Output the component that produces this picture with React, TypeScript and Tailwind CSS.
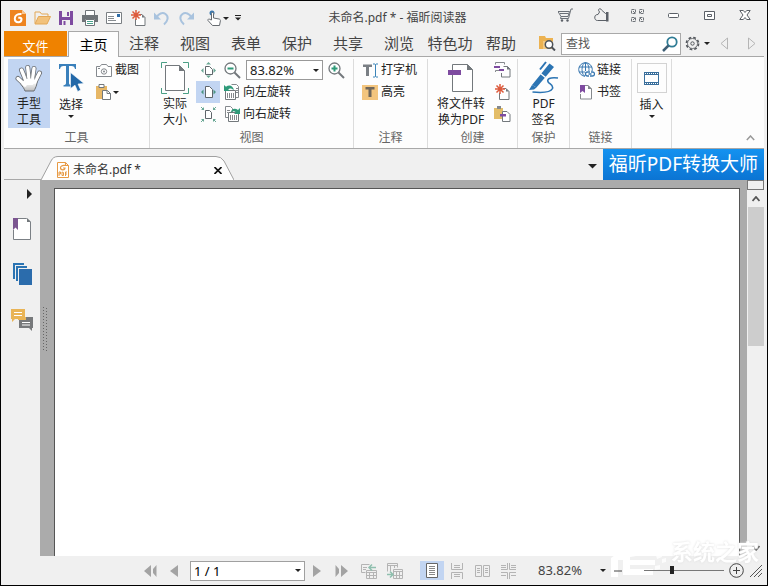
import { useState, type ReactNode } from 'react'

const MENU_TABS = ['注释', '视图', '表单', '保护', '共享', '浏览', '特色功', '帮助']

function Icon({ w, h, children }: { w: number; h: number; children: ReactNode }) {
  return (
    <svg width={w} height={h} viewBox={`0 0 ${w} ${h}`} fill="none" className="shrink-0" aria-hidden="true">
      {children}
    </svg>
  )
}

function Caret({ w = 6 }: { w?: number }) {
  return (
    <svg width={w} height={w / 2} viewBox="0 0 6 3" className="shrink-0" aria-hidden="true">
      <path d="M0 0h6L3 3z" fill="#222" />
    </svg>
  )
}

/* ---------- title bar icons ---------- */

const FoxitLogo = () => (
  <Icon w={16} h={16}>
    <path d="M0 0h12l4 4v12H0z" fill="#ee8420" />
    <path d="M12 0v4h4z" fill="#f9c58f" />
    <path d="M11.5 4c-4-.3-6.700 1.400-6.700 4.500 0 2.200 1.500 3.700 3.500 3.700 1.800 0 3.200-1.300 3.200-3 0-1-.6-1.500-1.500-1.500H8.300" stroke="#fff" strokeWidth="2" />
  </Icon>
)

const OpenIcon = () => (
  <Icon w={17} h={16}>
    <path d="M1 13.500V2h5l1.500 2H14v3" stroke="#e3a857" />
    <path d="M1 14 4.500 6.500h12L13 14z" fill="#f2c27c" stroke="#e3a857" />
  </Icon>
)

const SaveIcon = () => (
  <Icon w={14} h={14}>
    <path d="M0 0h14v14H0z" fill="#7e4ba0" />
    <path d="M3 0h8v6H3zM3 9h8v5H3z" fill="#f0f0f0" />
    <path d="M8 1h2v4H8zM4.500 10v4h2v-4z" fill="#7e4ba0" />
  </Icon>
)

const PrintIcon = () => (
  <Icon w={16} h={16}>
    <path d="M3.500 5V.5h9V5" fill="#fff" stroke="#6f7478" />
    <path d="M0 5h16v7h-3V9H3v3H0z" fill="#6f7478" />
    <path d="M3.500 9.500h9v6h-9z" fill="#fff" stroke="#6f7478" />
    <path d="M5 11.500h6M5 13.500h6" stroke="#4aa18a" />
  </Icon>
)

const MailIcon = () => (
  <Icon w={16} h={12}>
    <path d="M.5.5h15v11H.5z" fill="#fff" stroke="#7a7f83" />
    <path d="M2 4.500h6M2 6.500h6M2 8.500h8" stroke="#888d91" />
    <path d="M11 2h3v3h-3z" fill="#2f6da8" />
  </Icon>
)

const Burst = ({ x, y }: { x: number; y: number }) => (
  <g transform={`translate(${x} ${y})`} stroke="#dd5a3c" strokeWidth="1.500">
    <path d="M0-5V5M-5 0H5M-3.500-3.500l7 7M3.500-3.500l-7 7" />
  </g>
)

const NewIcon = () => (
  <Icon w={15} h={16}>
    <path d="M8 4.500h3l3 3v8H4.500V9" fill="#fff" stroke="#73787c" />
    <path d="M11 4.500v3h3z" fill="#73787c" />
    <Burst x={5} y={5} />
  </Icon>
)

const UndoIcon = () => (
  <Icon w={16} h={16}>
    <path d="M2.500 7.500c2-4 6-5.500 9-3.500 3.500 2.500 2.500 7-1.500 10.500" stroke="#a9c3de" strokeWidth="2" />
    <path d="M0 2.500v7h7z" fill="#a9c3de" />
  </Icon>
)

const RedoIcon = () => (
  <Icon w={16} h={16}>
    <path d="M13.500 7.500c-2-4-6-5.500-9-3.500C1 6.500 2 11 6 14.500" stroke="#a9c3de" strokeWidth="2" />
    <path d="M16 2.500v7H9z" fill="#a9c3de" />
  </Icon>
)

const TouchIcon = () => (
  <Icon w={14} h={16}>
    <circle cx="5" cy="3" r="2.500" fill="#3a78b0" />
    <path d="M4.500 10V3.500c0-1.500 2-1.500 2 0V8l5.500 1c1 .2 1.500.8 1.400 1.800l-.9 4.700h-7L1 10.500c-.5-1.300 1-2 2-1z" fill="#fff" stroke="#666b70" />
  </Icon>
)

const CartIcon = () => (
  <Icon w={15} h={14}>
    <path d="M0 3.500h11.500L10 8.500H3zM3 8.500l-.5 2h8L13 1h2M2 5.500h8.500" stroke="#6b7077" />
    <circle cx="4" cy="12.500" r="1.200" fill="#5b6067" />
    <circle cx="9.500" cy="12.500" r="1.200" fill="#5b6067" />
  </Icon>
)

const ThumbIcon = () => (
  <Icon w={15} h={14}>
    <path d="M4 6.500 5.500 4 4.500 2.200C4.300.5 7 .2 7.500 2l4 3.500h1v7h-9C1.500 12.500.6 11 .8 9c.2-1.800 1.500-2.500 3.200-2.500z" stroke="#5b6067" />
    <path d="M12 4h2.500v9.500H12z" fill="#5b6067" />
  </Icon>
)

const TilesIcon = () => (
  <Icon w={13} h={13}>
    <path d="M.5.5h4v4h-4zM8.500.5h4v4h-4zM.5 8.500h4v4h-4zM8.500 8.500h4v4h-4z" stroke="#70757a" strokeDasharray="3 1" />
    <path d="m2 2 2 2M11 2 9 4M2 11l2-2M11 11 9 9" stroke="#70757a" />
  </Icon>
)

const MinIcon = () => (
  <Icon w={11} h={5}><rect x=".5" y=".5" width="10" height="4" rx="1" fill="#fff" stroke="#5b6067" /></Icon>
)
const MaxIcon = () => (
  <Icon w={11} h={9}><path d="M.5.5h10v8H.5zM3.500 3.500h4v2h-4z" fill="#fff" stroke="#5b6067" /></Icon>
)
const CloseIcon = () => (
  <Icon w={12} h={10}>
    <path d="M.8.5h3.500L6 2.500 7.700.5h3.500L8 5l3.200 4.500H7.700L6 7.500l-1.700 2H.8L4 5z" fill="#fff" stroke="#5b6067" />
  </Icon>
)

/* ---------- menu row icons ---------- */

const FolderSearch = () => (
  <Icon w={17} h={15}>
    <path d="M0 0h6l1 2h7v11H0z" fill="#ecb251" />
    <path d="M4 5h10v8H4z" fill="#f3ca84" />
    <circle cx="10" cy="8.500" r="3.700" fill="#fff" stroke="#4d5258" strokeWidth="1.500" />
    <path d="m12.500 11 3.500 3.500" stroke="#4d5258" strokeWidth="2" />
  </Icon>
)

const SearchGlass = () => (
  <Icon w={16} h={16}>
    <circle cx="10" cy="6" r="4.700" stroke="#2f7c95" strokeWidth="1.800" />
    <path d="m6.500 9.500-5.500 5.500" stroke="#3f5f75" strokeWidth="2.500" />
  </Icon>
)

const GearIcon = () => (
  <Icon w={15} h={15}>
    <circle cx="7.500" cy="7.500" r="6" stroke="#55595e" strokeWidth="1.800" strokeDasharray="2.700 2.010" />
    <circle cx="7.500" cy="7.500" r="5" fill="#f0f0f0" stroke="#55595e" strokeWidth=".8" />
    <circle cx="7.500" cy="7.500" r="1.700" stroke="#55595e" />
  </Icon>
)

/* ---------- ribbon icons ---------- */

const FINGERS = 'M3 14.500 10 21M6.500 6 11 17M12.700 3.500 14 15M19 4.500 17.500 15M24.500 9 20 18'

const HandIcon = () => (
  <Icon w={28} h={28}>
    <defs>
      <linearGradient id="palm" x1="0" y1="0" x2="0" y2="1">
        <stop offset="0.200" stopColor="#fff" />
        <stop offset="1" stopColor="#bdbdbd" />
      </linearGradient>
    </defs>
    <path d={FINGERS} stroke="#6a6e73" strokeWidth="5" strokeLinecap="round" />
    <path d="M9 15h12.500c1.500 4-.5 8-2.500 12h-9c-.7-2.500-2.500-4.500-4-6.500z" fill="url(#palm)" stroke="#6a6e73" />
    <path d={FINGERS} stroke="#fff" strokeWidth="3.400" strokeLinecap="round" />
    <path d="M10.500 14.500h10V18l-3 3h-7z" fill="#fff" />
    <path d="M10.800 10.500 12 15M15.700 9.500v5M20.500 11l-1 4.500" stroke="#8f9397" strokeWidth=".8" />
  </Icon>
)

const SelectIcon = () => (
  <Icon w={27} h={28}>
    <path d="M1 0h17v5h-1c-.4-2-1.300-3-3.500-3H11v17c0 1.500.8 2 2.500 2.200v1.300h-8v-1.300C7.200 21 8 20.500 8 19V2H5.500C3.300 2 2.400 3 2 5H1z" fill="#3a80bb" />
    <path d="M12.500 8.500v16l4.500-3.300 2.700 6.300 3-1.500-2.700-6 6-.5z" fill="#2268a8" stroke="#fff" strokeWidth=".6" />
  </Icon>
)

const CameraIcon = () => (
  <Icon w={16} h={13}>
    <path d="M.5 2.500H4L5.500.5h5L12 2.500h3.500v10H.5z" fill="#fff" stroke="#85898e" />
    <circle cx="8" cy="7.500" r="2.700" stroke="#85898e" />
    <circle cx="8" cy="7.500" r="1" fill="#85898e" />
    <path d="M2 4.500h2" stroke="#85898e" />
  </Icon>
)

const PasteIcon = () => (
  <Icon w={15} h={16}>
    <path d="M0 2h11v13H0z" fill="#e7b766" />
    <path d="M3 .5h5v3H3z" fill="#fff" stroke="#73787c" />
    <path d="M6.500 6.500h5l3 3v6h-8z" fill="#fff" stroke="#73787c" />
    <path d="M11 6.500v3h3.500" stroke="#73787c" />
  </Icon>
)

const ActualSizeIcon = () => (
  <Icon w={28} h={32}>
    <path d="M.5 6V.5H6M22 .5h5.500V6M27.500 26v5.500H22M6 31.500H.5V26" stroke="#4a9f85" />
    <path d="M4.500 3.500h14l5 5v20h-19z" fill="#fff" stroke="#73787c" />
    <path d="M18 3v6h6z" fill="#73787c" />
  </Icon>
)

const FitPageIcon = () => (
  <Icon w={15} h={16}>
    <path d="M4.500 4.500h4l3 3v5h-7z" fill="#fff" stroke="#5f666b" />
    <path d="M5 2.500 7.500 0 10 2.500zM5 13.500l2.500 2.500 2.500-2.500zM2.500 6 0 8.500 2.500 11zM12.500 6 15 8.500 12.500 11z" fill="#6aa895" />
  </Icon>
)

const FitWidthIcon = () => (
  <Icon w={15} h={14}>
    <path d="M4.500 1.500h4l3 3v8h-7z" fill="#fff" stroke="#5f666b" />
    <path d="M2.500 4.500 0 7l2.500 2.500zM12.500 4.500 15 7l-2.500 2.500z" fill="#4b9682" />
  </Icon>
)

const FitVisibleIcon = () => (
  <Icon w={15} h={15}>
    <path d="M4.500 3.500h4l2 2v6h-6z" fill="#fff" stroke="#5f666b" />
    <path d="m0 0 3 3M15 0l-3 3M0 15l3-3M15 15l-3-3" stroke="#6aa895" />
    <path d="M3 0v3H0zM12 0v3h3zM3 15v-3H0zM12 15v-3h3z" fill="#6aa895" />
  </Icon>
)

const ZoomIcon = ({ plus = false }: { plus?: boolean }) => (
  <Icon w={17} h={17}>
    <circle cx="6.500" cy="6.500" r="5.500" fill="#fff" stroke="#73787c" strokeWidth="1.300" />
    <path d={plus ? 'M3.500 6.500h6M6.500 3.500v6' : 'M3.500 6.500h6'} stroke="#2f9a79" strokeWidth="2" />
    <path d="m10.500 10.500 5.500 5.500" stroke="#73787c" strokeWidth="2" />
  </Icon>
)

const RotateLeftIcon = () => (
  <Icon w={16} h={16}>
    <path d="M7.500.5h5l2 2v11h-4" fill="#fff" stroke="#85898d" />
    <path d="M1.500 6.500h10v9h-10z" fill="#fff" stroke="#73787c" />
    <path d="M3.500 9v5M5.500 9v5M7.500 9v5M9.500 9v5M12 4.500h2M12 6.500h2M12 8.500h2" stroke="#85898d" />
    <path d="M0 1v6h6L4.200 5.200C5.500 4 7.500 4 10 6 9 1.500 5 0 2 2.800z" fill="#2f9a79" />
  </Icon>
)

const RotateRightIcon = () => (
  <Icon w={16} h={16}>
    <path d="M1.500.5h5l2 2v9h-7z" fill="#fff" stroke="#85898d" />
    <path d="M4.500 6.500h10v9h-10z" fill="#fff" stroke="#73787c" />
    <path d="M6.500 9v5M8.500 9v5M10.500 9v5M12.500 9v5M3 4.500h3M3 6.500h1" stroke="#85898d" />
    <path d="M16 2v6h-6l1.800-1.800C10.500 5 9 5 6.500 6.800 7.500 2.500 11 1.500 14 4z" fill="#2f9a79" />
  </Icon>
)

const TypewriterIcon = () => (
  <Icon w={15} h={15}>
    <path d="M0 1.500h9v2.500H6v9H3V4H0z" fill="#7a7f84" />
    <path d="M10 1h2l.5.5L13 1h2M12.500 1.500v12M10 14h2l.5-.5.5.5h2" stroke="#3b84b8" />
  </Icon>
)

const HighlightIcon = () => (
  <Icon w={16} h={15}>
    <path d="M0 0h16v15H0z" fill="#f3c57e" />
    <path d="M3.500 2h9v2.500h-3V12h-3V4.500h-3z" fill="#6f665a" />
  </Icon>
)

const ConvertIcon = () => (
  <Icon w={26} h={30}>
    <path d="M4.500 1.500h15l5 5v22h-20z" fill="#fff" stroke="#73787c" />
    <path d="M19 1v6h6z" fill="#73787c" />
    <path d="M0 7h13v5H0z" fill="#7e4ba0" />
  </Icon>
)

const ScanIcon = () => (
  <Icon w={17} h={16}>
    <path d="M1.500 2.500V.5h9v2M1.500 10V8.500h5" stroke="#85898d" />
    <path d="M0 4h6v2H0zM5 7h5v2H5z" fill="#7e4ba0" />
    <path d="M9.500 4.500h4l2.500 2.500v8H7.500v-4" fill="none" stroke="#73787c" />
    <path d="M13 4v3.500h3.500z" fill="#73787c" />
  </Icon>
)

const FromClipboardIcon = () => (
  <Icon w={17} h={16}>
    <path d="M0 2h9v11H0z" fill="#e3bd68" />
    <path d="M3 0h4v3H3z" fill="#85898d" />
    <path d="M8.500 5.500h4.500l3 3v7H8.500z" fill="#fff" stroke="#73787c" />
    <path d="M6 8h6v2.500H6z" fill="#7e4ba0" />
  </Icon>
)

const SignIcon = () => (
  <Icon w={30} h={33}>
    <path d="M3 24 20.500 2.500 25 6 7.500 26.500z" fill="#2b74b3" />
    <path d="m0 29 3-5 4.500 2.500L5 28.500z" fill="#2b74b3" />
    <path d="m11.500 12.500 5 4" stroke="#fff" strokeWidth="1.500" />
    <path d="m11 8.500 6-7.500" stroke="#2b74b3" strokeWidth="2" />
    <path d="M29 17c-8-1-12 1-9.500 4.500 2 2 5 2.500 4 6-2 4-10 4.500-20 3.500" stroke="#2b74b3" strokeWidth="1.600" />
  </Icon>
)

const LinkIcon = () => (
  <Icon w={17} h={16}>
    <circle cx="7.500" cy="7.500" r="6.800" stroke="#3a78b0" />
    <path d="M7.500.5v14M1 5h13M1 10h13" stroke="#3a78b0" />
    <ellipse cx="7.500" cy="7.500" rx="3.500" ry="6.800" stroke="#3a78b0" />
    <path d="M7 9h10v7H7z" fill="#fff" />
    <path d="M11 14H9.500a2 2 0 0 1 0-4H12M13 10h1.500a2 2 0 0 1 0 4H12M10.500 12h3" stroke="#3a78b0" strokeWidth="1.300" />
  </Icon>
)

const BookmarkSmall = () => (
  <Icon w={12} h={15}>
    <path d="M5 .5h3l3.500 3.500v10H.5V9" fill="#fff" stroke="#85898d" />
    <path d="M8 0v4h4z" fill="#85898d" />
    <path d="M0 0h5v8L2.500 6 0 8z" fill="#7e4ba0" />
  </Icon>
)

const FilmIcon = () => (
  <Icon w={15} h={13}>
    <path d="M0 0h15v13H0z" fill="#3a6f9c" />
    <path d="M1 3h13v7H1z" fill="#fff" />
    <path d="M1 1.500h13M1 11.500h13" stroke="#fff" strokeDasharray="1 1" />
  </Icon>
)

/* ---------- side panel icons ---------- */

const BookmarkPanelIcon = () => (
  <Icon w={18} h={22}>
    <path d="M5 .5h8.500L17.500 4v17.500H.5V12" fill="#fff" stroke="#7b8085" />
    <path d="M14 0v4h4z" fill="#73787c" />
    <path d="M0 0h5v12L2.500 9.500 0 12z" fill="#7b5590" />
  </Icon>
)

const PagesPanelIcon = () => (
  <Icon w={19} h={22}>
    <path d="M1 16V1h10" stroke="#2b74b3" strokeWidth="2" />
    <path d="M4 18V4h10" stroke="#2b74b3" strokeWidth="2" />
    <path d="M6 6h13v16H6z" fill="#2b6cac" />
  </Icon>
)

const CommentsPanelIcon = () => (
  <Icon w={22} h={22}>
    <path d="M0 0h14v10H4l-3 3v-3H0z" fill="#e9b456" />
    <path d="M3 3.500h8M3 6.500h8" stroke="#fff" />
    <path d="M8 8h14v11h-1v3l-3-3H8z" fill="#77797b" />
    <path d="M7 8h8v3H7z" fill="#e9b456" />
    <path d="M11 13.500h8M11 16h8" stroke="#fff" />
  </Icon>
)

/* ---------- ribbon building blocks ---------- */

function Group({ label, className, children }: { label: string; className: string; children: ReactNode }) {
  return (
    <section aria-label={label} className={`flex shrink-0 flex-col border-r border-[#dcdcdc] ${className}`}>
      <div className="flex h-[69px]">{children}</div>
      <div className="h-4 text-center leading-5 text-[#666]">{label}</div>
    </section>
  )
}

function BigButton({ icon, lines, caret, active, className = '' }: {
  icon: ReactNode
  lines: string[]
  caret?: boolean
  active?: boolean
  className?: string
}) {
  return (
    <button type="button" className={`flex flex-col items-center leading-4 ${active ? 'bg-[#c2d5f2]' : ''} ${className}`}>
      <span className="flex h-[38px] w-full items-center justify-center">{icon}</span>
      {lines.map(l => <span key={l} className="whitespace-nowrap">{l}</span>)}
      {caret && <span className="mt-0.5"><Caret /></span>}
    </button>
  )
}

function SmallButton({ icon, text }: { icon: ReactNode; text: string }) {
  return (
    <button type="button" className="flex h-[22px] items-center gap-[3px] whitespace-nowrap">
      <span className="flex w-4 justify-center">{icon}</span>
      {text}
    </button>
  )
}

function IconButton({ label, className = '', children }: { label: string; className?: string; children: ReactNode }) {
  return (
    <button type="button" aria-label={label} className={`flex shrink-0 items-center justify-center ${className}`}>
      {children}
    </button>
  )
}

function TitleBar() {
  return (
    <header className="flex h-[30px] shrink-0 items-center">
      <div className="flex w-[247px] shrink-0 items-center pt-1 pl-[5px]">
        <IconButton label="福昕阅读器" className="w-6"><FoxitLogo /></IconButton>
        <IconButton label="打开" className="w-6"><OpenIcon /></IconButton>
        <IconButton label="保存" className="w-6"><SaveIcon /></IconButton>
        <IconButton label="打印" className="w-6"><PrintIcon /></IconButton>
        <IconButton label="邮件" className="w-6"><MailIcon /></IconButton>
        <IconButton label="新建" className="w-6"><NewIcon /></IconButton>
        <IconButton label="撤销" className="w-6"><UndoIcon /></IconButton>
        <IconButton label="重做" className="w-6"><RedoIcon /></IconButton>
        <IconButton label="触摸模式" className="ml-1 w-8 gap-0.5"><TouchIcon /><Caret /></IconButton>
        <IconButton label="自定义快速访问工具栏" className="w-2">
          <Icon w={6} h={6}>
            <path d="M0 .5h6" stroke="#222" />
            <path d="M0 2.500h6l-3 3z" fill="#222" />
          </Icon>
        </IconButton>
      </div>
      <h1 className="flex-1 truncate pt-1 text-center text-[12px] text-[#444]">未命名.pdf * - 福昕阅读器</h1>
      <div className="mr-1 mb-0.5 flex shrink-0 items-center">
        <IconButton label="购物车" className="w-9"><CartIcon /></IconButton>
        <IconButton label="赞" className="w-9"><ThumbIcon /></IconButton>
        <IconButton label="全屏" className="w-9"><TilesIcon /></IconButton>
        <IconButton label="最小化" className="w-9"><MinIcon /></IconButton>
        <IconButton label="最大化" className="w-9"><MaxIcon /></IconButton>
        <IconButton label="关闭" className="w-9"><CloseIcon /></IconButton>
      </div>
    </header>
  )
}

function MenuRow() {
  return (
    <nav className="mx-[3px] flex h-[25px] shrink-0 text-[15px] text-[#444]">
      <button type="button" className="w-[63px] bg-[#ef8200] pt-1 text-[13px] leading-4 text-white">文件</button>
      <button type="button" className="z-10 ml-px -mb-px w-[51px] border border-b-0 border-[#a8a8a8] bg-[#fdfdfd] text-[14px] text-black">主页</button>
      {MENU_TABS.map(tab => (
        <button key={tab} type="button" className="-ml-px w-[52px] shrink-0 whitespace-nowrap">{tab}</button>
      ))}
      <div className="ml-auto flex items-center">
        <IconButton label="高级查找" className="mr-1 w-5"><FolderSearch /></IconButton>
        <div className="flex h-[22px] w-[120px] items-center border border-[#a9a9a9] bg-white pr-0.5">
          <input aria-label="查找" placeholder="查找" className="min-w-0 flex-1 pl-1 text-[12px] outline-none placeholder:text-[#555]" />
          <IconButton label="搜索"><SearchGlass /></IconButton>
        </div>
        <IconButton label="设置" className="ml-1 gap-1"><GearIcon /><Caret /></IconButton>
        <IconButton label="上一个" className="ml-1 w-5">
          <Icon w={8} h={13}><path d="M7.500 1v11L1 6.500z" stroke="#b5b5b5" /></Icon>
        </IconButton>
        <IconButton label="下一个" className="mr-0.5 ml-2 w-5">
          <Icon w={8} h={13}><path d="M.5 1v11L7 6.500z" stroke="#b5b5b5" /></Icon>
        </IconButton>
      </div>
    </nav>
  )
}

function Ribbon() {
  return (
    <div className="mx-[3px] flex h-[93px] shrink-0 border-y border-[#a8a8a8] bg-[#fdfdfd] pt-0.5 text-[12px] text-[#222]">
      <Group label="工具" className="w-[146px]">
        <BigButton active icon={<HandIcon />} lines={['手型', '工具']} className="ml-1 w-[42px]" />
        <BigButton icon={<SelectIcon />} lines={['选择']} caret className="w-[42px]" />
        <div className="ml-1 flex flex-col items-start">
          <SmallButton icon={<CameraIcon />} text="截图" />
          <IconButton label="粘贴" className="h-[22px] gap-0.5"><PasteIcon /><Caret /></IconButton>
        </div>
      </Group>

      <Group label="视图" className="w-[204px]">
        <BigButton icon={<ActualSizeIcon />} lines={['实际', '大小']} className="ml-1 w-[42px]" />
        <div className="flex flex-col">
          <IconButton label="适合页面" className="h-[22px] w-6"><FitPageIcon /></IconButton>
          <IconButton label="适合宽度" className="h-[22px] w-6 bg-[#c2d5f2]"><FitWidthIcon /></IconButton>
          <IconButton label="适合可见" className="h-[22px] w-6"><FitVisibleIcon /></IconButton>
        </div>
        <div className="ml-1 flex flex-col items-start">
          <div className="flex h-[22px] items-center gap-[5px]">
            <IconButton label="缩小"><ZoomIcon /></IconButton>
            <div className="relative flex items-center">
              <select aria-label="缩放比例" className="h-5 w-[77px] appearance-none border border-[#999] bg-white pl-[3px] text-[13px] leading-4">
                <option>83.82%</option>
              </select>
              <span className="pointer-events-none absolute right-1"><Caret /></span>
            </div>
            <IconButton label="放大"><ZoomIcon plus /></IconButton>
          </div>
          <SmallButton icon={<RotateLeftIcon />} text="向左旋转" />
          <SmallButton icon={<RotateRightIcon />} text="向右旋转" />
        </div>
      </Group>

      <Group label="注释" className="w-[74px]">
        <div className="ml-2 flex flex-col items-start">
          <SmallButton icon={<TypewriterIcon />} text="打字机" />
          <SmallButton icon={<HighlightIcon />} text="高亮" />
        </div>
      </Group>

      <Group label="创建" className="w-[90px]">
        <BigButton icon={<ConvertIcon />} lines={['将文件转', '换为PDF']} className="ml-2 w-[50px]" />
        <div className="ml-2 flex flex-col">
          <IconButton label="从扫描仪" className="h-[22px]"><ScanIcon /></IconButton>
          <IconButton label="空白" className="h-[22px]"><NewIcon /></IconButton>
          <IconButton label="从剪贴板" className="h-[22px]"><FromClipboardIcon /></IconButton>
        </div>
      </Group>

      <Group label="保护" className="w-[52px]">
        <BigButton icon={<SignIcon />} lines={['PDF', '签名']} className="w-full" />
      </Group>

      <Group label="链接" className="w-[62px]">
        <div className="ml-2 flex flex-col items-start">
          <SmallButton icon={<LinkIcon />} text="链接" />
          <SmallButton icon={<BookmarkSmall />} text="书签" />
        </div>
      </Group>

      <section className="flex w-10 shrink-0 flex-col border-r border-[#dcdcdc]">
        <BigButton
          icon={<span className="flex h-[30px] w-[30px] items-center justify-center border border-[#d3d3d3]"><FilmIcon /></span>}
          lines={['插入']} caret className="w-full"
        />
      </section>

      <IconButton label="折叠功能区" className="mt-auto mr-1.5 mb-0.5 ml-auto h-4 w-4">
        <Icon w={9} h={6}><path d="m.8 5 3.700-4 3.700 4" stroke="#999" strokeWidth="1.500" /></Icon>
      </IconButton>
    </div>
  )
}

function DocumentTabs() {
  return (
    <div className="mx-[3px] flex h-[31px] shrink-0 items-end">
      <div className="h-px w-[37px] bg-[#a8a8a8]" />
      <div className="relative h-6 w-[193px]">
        <svg viewBox="0 0 193 24" preserveAspectRatio="none" className="absolute inset-0 h-full w-full" aria-hidden="true">
          <path d="M0 24 10 5Q12 .5 17 .5H175Q180 .5 183 5L193 24" fill="#fdfdfd" stroke="#a0a0a0" />
        </svg>
        <div className="relative flex h-full items-center pt-1 pr-1.5 pl-4">
          <Icon w={12} h={16}>
            <path d="M.5.5h8l3 3v12H.5z" fill="#fff" stroke="#e79a45" />
            <path d="M8.500.5v3h3M8 3.500c-3-.3-4.500.7-4.500 2.300C3.500 7 4.500 7.800 5.800 7.800S8 7 8 6H6" stroke="#e79a45" strokeWidth="1.200" />
            <path d="M2 14v-4h1.500v2H2M5 10v3.500h1.500v-3zM8.500 14v-4H10M8.500 12H10" stroke="#e79a45" />
          </Icon>
          <span className="ml-1 text-[12px] text-[#333]">未命名.pdf *</span>
          <IconButton label="关闭标签" className="ml-auto w-5">
            <Icon w={8} h={7}><path d="M.5 0l7 7M7.500 0l-7 7" stroke="#111" strokeWidth="1.600" /></Icon>
          </IconButton>
        </div>
      </div>
      <div className="flex h-full flex-1 items-center justify-end pr-0.5">
        <IconButton label="标签列表" className="h-5 w-4 pt-1"><Caret w={9} /></IconButton>
      </div>
      <a href="#convert" className="h-full shrink-0 bg-linear-to-b from-[#1492f0] to-[#0b74d3] px-1.5 text-[19px] leading-[30px] text-white">
        福昕PDF转换大师
      </a>
    </div>
  )
}

function Workspace() {
  return (
    <main className="mx-[3px] flex min-h-0 flex-1">
      <aside className="flex w-9 shrink-0 flex-col items-center">
        <IconButton label="展开导航" className="mt-1.5 mr-2 h-4 self-end">
          <Icon w={5} h={10}><path d="M0 0v10l5-5z" fill="#222" /></Icon>
        </IconButton>
        <IconButton label="书签" className="mt-4 h-[22px]"><BookmarkPanelIcon /></IconButton>
        <IconButton label="页面" className="mt-[23px] h-[22px]"><PagesPanelIcon /></IconButton>
        <IconButton label="注释" className="mt-6 h-[22px]"><CommentsPanelIcon /></IconButton>
      </aside>
      <div className="flex w-3.5 shrink-0 items-start bg-[#ababab] pt-[127px] pl-0.5">
        <svg width="5" height="45" aria-hidden="true">
          <path d="M1.500 0v45M4.500 1v44" stroke="#666" strokeDasharray="1 2" />
        </svg>
      </div>
      <div className="flex-1 bg-[#ababab] pt-2 pr-[7px]">
        <article aria-label="第 1 页" className="h-full border border-b-0 border-[#555] bg-white" />
      </div>
      <div className="flex w-[17px] shrink-0 flex-col">
        <div className="h-[10px] shrink-0 border border-[#777] bg-[#f0f0f0]" />
        <IconButton label="向上滚动" className="h-[17px]">
          <Icon w={8} h={6}><path d="m.5 5 3.500-4 3.500 4" stroke="#555" strokeWidth="1.800" /></Icon>
        </IconButton>
        <div className="ml-px h-[139px] bg-[#cdcdcd]" />
        <IconButton label="向下滚动" className="mt-auto h-[17px]">
          <Icon w={8} h={6}><path d="m.5 1 3.500 4 3.500-4" stroke="#555" strokeWidth="1.800" /></Icon>
        </IconButton>
      </div>
    </main>
  )
}

function StatusBar() {
  const [zoom, setZoom] = useState(34)

  return (
    <footer className="relative z-10 mx-[3px] flex h-[29px] shrink-0 items-center text-[13px] text-[#444]">
      <div className="flex items-center pl-[138px]">
        <IconButton label="第一页" className="w-4">
          <Icon w={13} h={12}><path d="M7 0v12L0 6zM12.500 0v12L9 8V4z" fill="#a3a3a3" /></Icon>
        </IconButton>
        <IconButton label="上一页" className="ml-2 w-4">
          <Icon w={8} h={12}><path d="M8 0v12L0 6z" fill="#a3a3a3" /></Icon>
        </IconButton>
        <div className="relative ml-2 flex items-center">
          <select aria-label="页码" className="h-5 w-[115px] appearance-none border border-[#a0a0a0] bg-white pl-[3px] text-[13px] leading-4 text-black">
            <option>1 / 1</option>
          </select>
          <span className="pointer-events-none absolute right-1"><Caret /></span>
        </div>
        <IconButton label="下一页" className="ml-1 w-4">
          <Icon w={8} h={12}><path d="M0 0v12l8-6z" fill="#a3a3a3" /></Icon>
        </IconButton>
        <IconButton label="最后一页" className="ml-2 w-4">
          <Icon w={13} h={12}><path d="M6 0v12l7-6zM.5 0v12L4 8V4z" fill="#a3a3a3" /></Icon>
        </IconButton>
        <IconButton label="上一视图" className="ml-3 w-4">
          <Icon w={16} h={16}>
            <path d="M.5 1.500h8M.5 9.500h4M.5 1.500v8M2 4.500h4M2 6.500h3M5.500 7.500h10v8h-10zM5.500 9.500h10M8.500 9v6M12.500 9v6M6 12.500h9" stroke="#b4b4b4" />
            <path d="M8 4.500h7M11 1.500l-3 3 3 3" stroke="#8fbfae" strokeWidth="1.500" />
          </Icon>
        </IconButton>
        <IconButton label="下一视图" className="ml-[10px] w-4">
          <Icon w={16} h={16}>
            <path d="M.5 8.500v-8h10v4M.5 2.500h10M3.500 2v6M7.500 2v3M6.500 6.500h9v9h-9zM6.500 8.500h9M9.500 8v7M12.500 8v7M7 12.500h8" stroke="#b4b4b4" />
            <path d="M0 11.500h6M3 8.500l3 3-3 3" stroke="#8fbfae" strokeWidth="1.500" />
          </Icon>
        </IconButton>
      </div>

      <div className="ml-auto flex items-center">
        <IconButton label="单页" className="h-[19px] w-6 bg-[#c2d5f2]">
          <Icon w={12} h={15}><path d="M.5.5h11v14H.5z" fill="#fff" stroke="#666" /><path d="M3 3.500h6M3 5.500h6M3 7.500h6M3 9.500h6M3 11.500h6" stroke="#888" /></Icon>
        </IconButton>
        <IconButton label="连续" className="w-[26px]">
          <Icon w={12} h={16}><path d="M.5 0v6.500h11V0M.5 16V9.500h11V16M3 2.500h6M3 4.500h6M3 11.500h6M3 13.500h6" stroke="#b4b4b4" /></Icon>
        </IconButton>
        <IconButton label="对开" className="w-[26px]">
          <Icon w={15} h={12}><path d="M.5.5h6v11h-6zM8.500.5h6v11h-6zM2 3.500h3M2 5.500h3M2 7.500h3M10 3.500h3M10 5.500h3M10 7.500h3" stroke="#b4b4b4" /></Icon>
        </IconButton>
        <IconButton label="连续对开" className="w-[26px]">
          <Icon w={15} h={16}><path d="M0 6.500h6.500V0M15 6.500H8.500V0M0 9.500h6.500V16M15 9.500H8.500V16M0 2.500h5M10 2.500h5M0 4.500h5M10 4.500h5M0 12.500h5M10 12.500h5" stroke="#b4b4b4" /></Icon>
        </IconButton>
        <button type="button" className="ml-4 flex items-center gap-[18px]">83.82%<Caret /></button>
        <IconButton label="缩小" className="ml-1.5 w-3">
          <Icon w={8} h={2}><path d="M0 1h8" stroke="#444" /></Icon>
        </IconButton>
        <input
          type="range"
          aria-label="缩放"
          min={0}
          max={100}
          value={zoom}
          onChange={e => setZoom(Number(e.target.value))}
          className="mr-1 ml-5 h-4 w-20 appearance-none bg-transparent [&::-webkit-slider-runnable-track]:h-px [&::-webkit-slider-runnable-track]:bg-[#777] [&::-webkit-slider-thumb]:-mt-1 [&::-webkit-slider-thumb]:h-2 [&::-webkit-slider-thumb]:w-1 [&::-webkit-slider-thumb]:appearance-none [&::-webkit-slider-thumb]:bg-[#222]"
        />
        <IconButton label="放大" className="w-4">
          <Icon w={15} h={15}><circle cx="7.500" cy="7.500" r="6.800" stroke="#444" /><path d="M4 7.500h7M7.500 4v7" stroke="#444" /></Icon>
        </IconButton>
        <span className="ml-1 flex w-4 justify-center">
          <Icon w={12} h={12}><path d="M0 12 12 0M4 12l8-8M8 12l4-4" stroke="#555" /></Icon>
        </span>
      </div>
    </footer>
  )
}

/* house mark and site name laid over the bottom right corner */
function Watermark() {
  return (
    <div className="pointer-events-none absolute right-2 bottom-1.5 flex items-center gap-1 text-white">
      <Icon w={58} h={46}>
        <path d="M3 20 27 3l21 8-2 5-18-6L8 24z" fill="#fff" />
        <path d="M6 22 46 16v4L21 24v3h25v5H21v4h23v6H14V27H9v17H2V25z" fill="#fff" />
        <path d="m47 22 5-2 1 4-5 2zM46 33l5-1v4l-5 1zM53 26l4-1v4l-4 1z" fill="#fff" opacity="0.800" />
      </Icon>
      <span className="mb-2.5 text-[22px] leading-6 font-bold drop-shadow-[0_0_1px_#ddd]">系统之家</span>
    </div>
  )
}

export default function App() {
  return (
    <div className="relative flex h-screen min-w-[768px] flex-col overflow-hidden border border-black bg-[#f0f0f0] font-['Noto_Sans','Noto_Sans_CJK_SC',sans-serif]">
      <TitleBar />
      <MenuRow />
      <Ribbon />
      <DocumentTabs />
      <Workspace />
      <Watermark />
      <StatusBar />
    </div>
  )
}
